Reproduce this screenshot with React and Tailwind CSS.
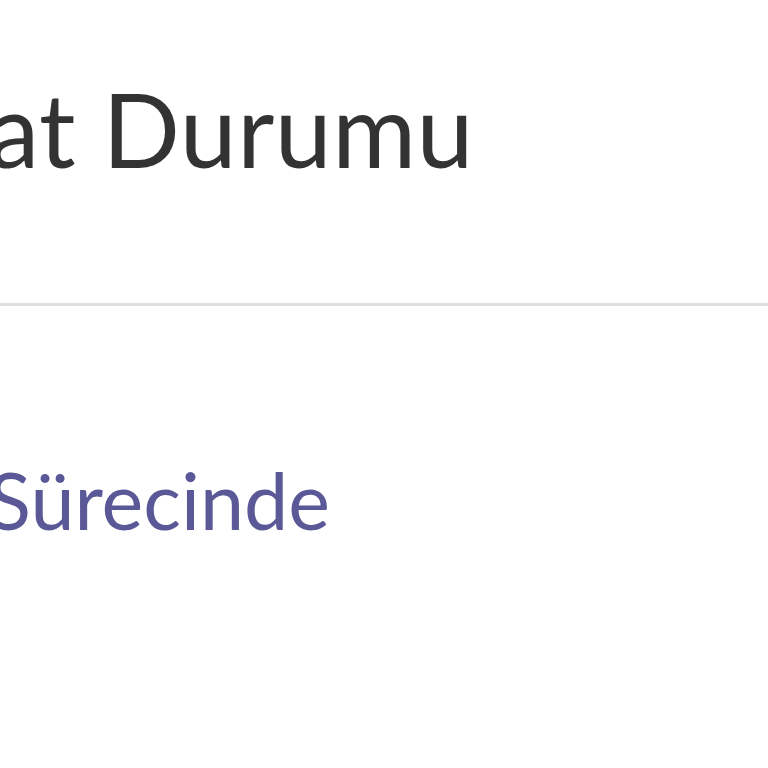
export default function App() {
  return (
    <div className="w-[768px] h-[768px] overflow-hidden bg-white font-['Lato','Liberation_Sans',sans-serif]">
      <div className="flex justify-end w-[474px] pt-[64px] h-[303px]">
        <h1 className="whitespace-nowrap text-[102px] leading-[130px] text-[#333333] font-normal tracking-[0.5px]">
          Tahsilat Durumu
        </h1>
      </div>
      <div className="h-[3px] bg-[#e0e0e0]" />
      <div className="flex justify-end w-[330px] pt-[144px]">
        <span className="whitespace-nowrap text-[79px] leading-[100px] text-[#5a5896]">
          Ödeme&nbsp;Sürecinde
        </span>
      </div>
    </div>
  );
}
